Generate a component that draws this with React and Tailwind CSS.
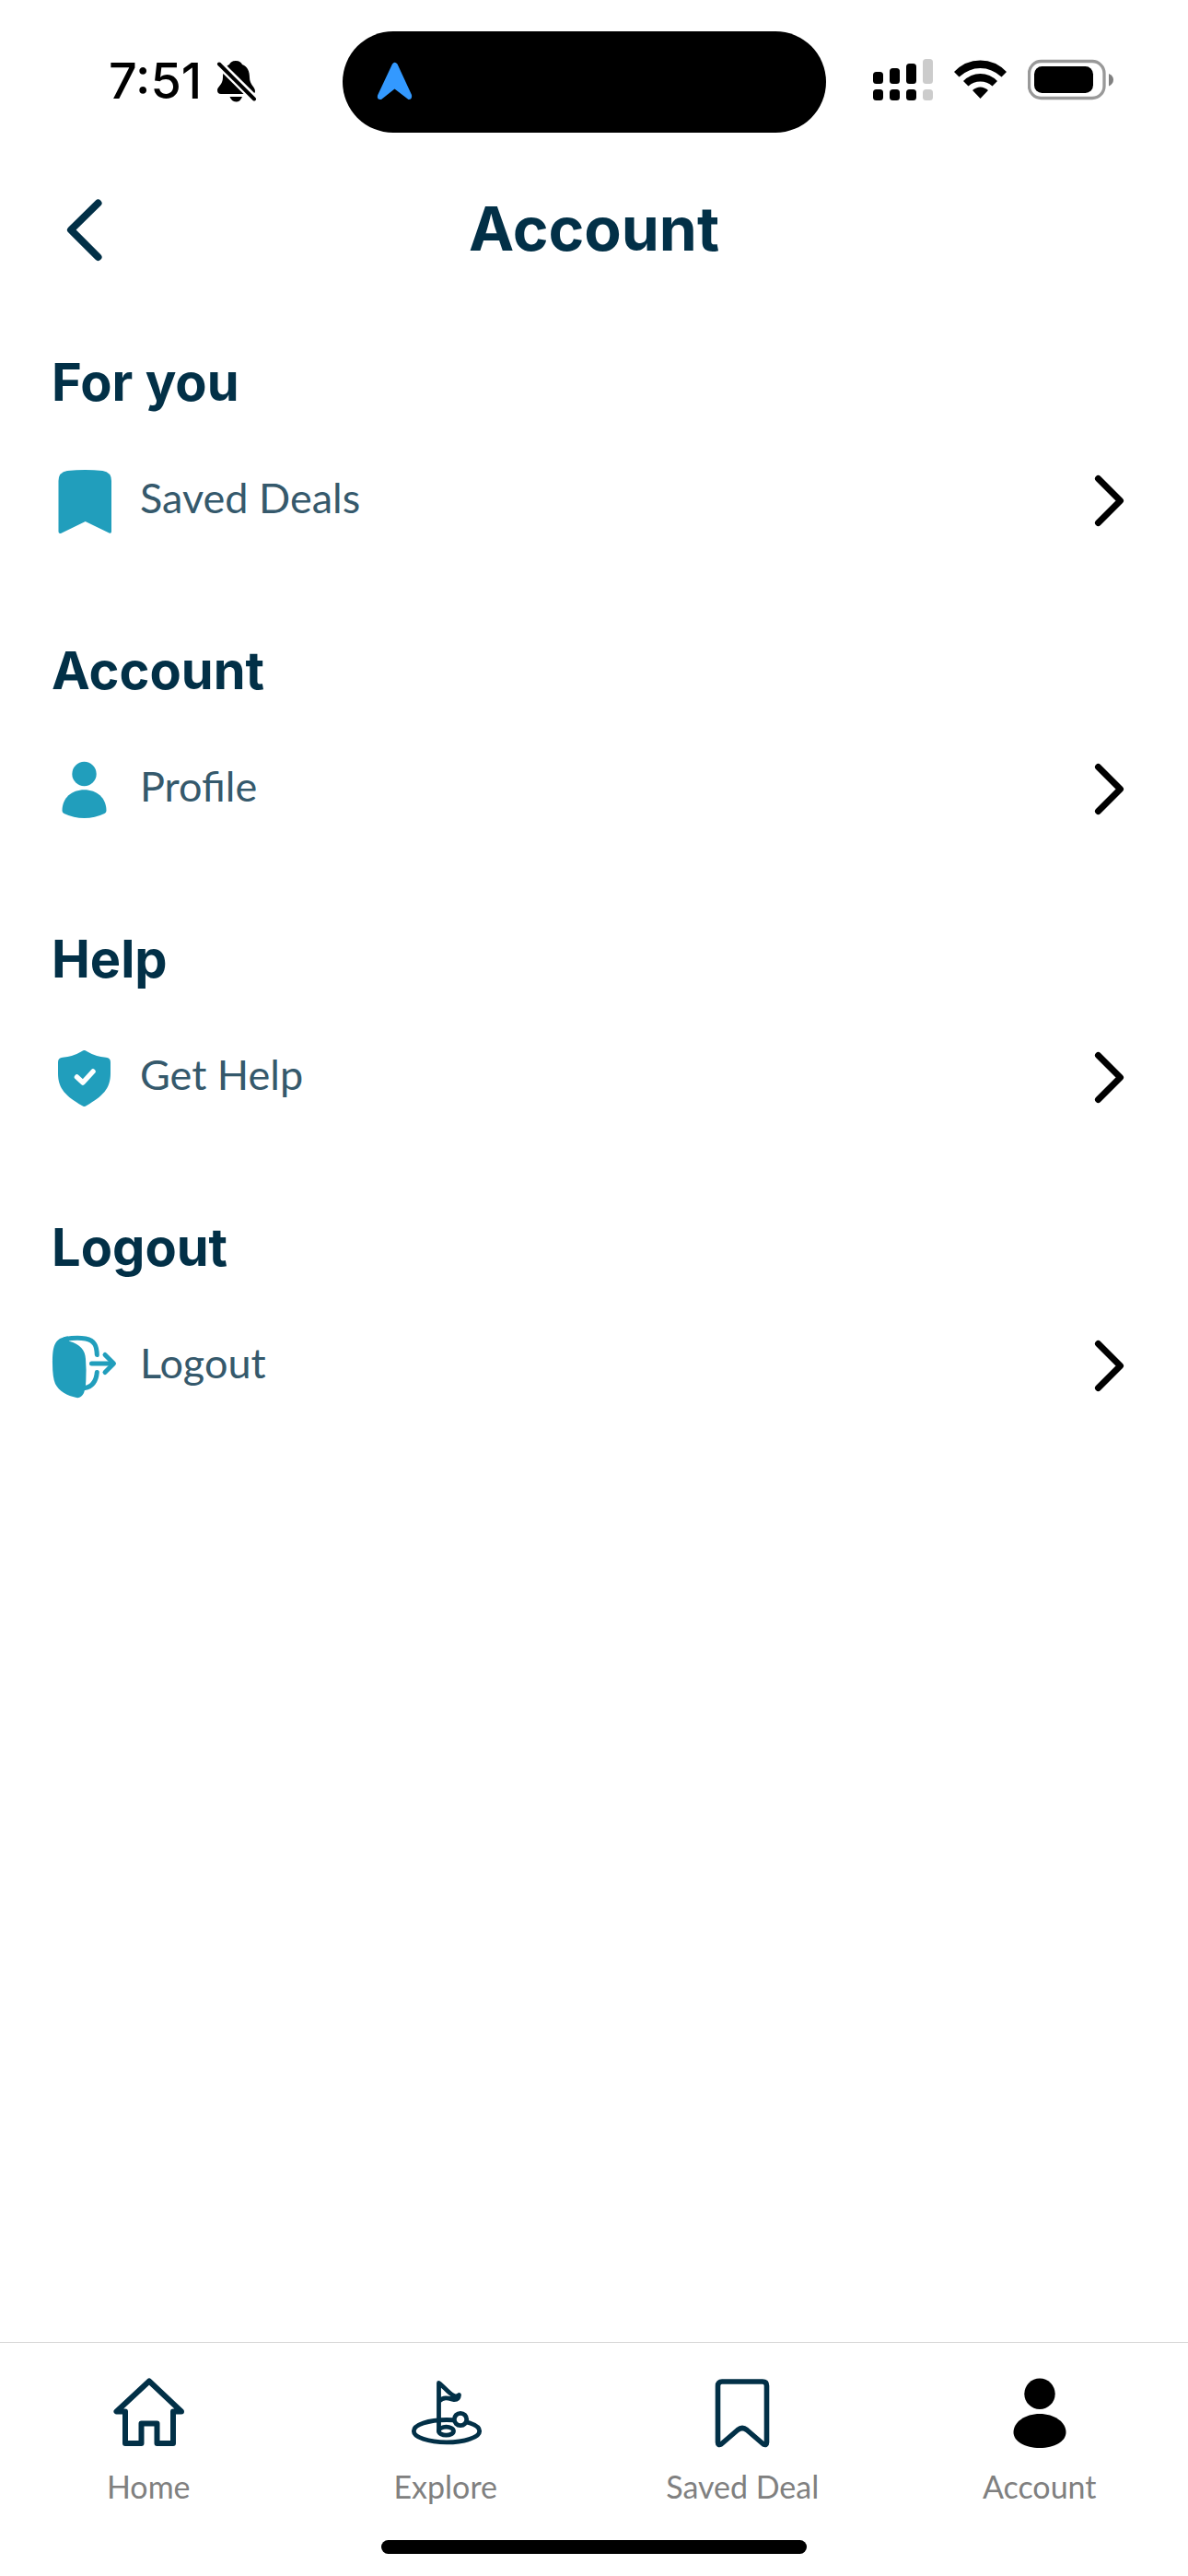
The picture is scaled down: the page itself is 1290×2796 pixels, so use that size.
import React from 'react'

const teal = '#219EBC'
const navy = '#023047'

const SavedIcon = () => (
    <svg viewBox="0 0 72 72" className="w-[72px] h-[72px]" fill={teal} aria-hidden="true">
        <path d="M7.5 14Q7.5 4.5 17 3Q36.5 1 55.5 3Q65 4.5 65 14V69Q65 71.5 62.5 70.5L36.7 58L10 71Q7.5 71.5 7.5 69Z" />
    </svg>
)

const ProfileIcon = () => (
    <svg viewBox="0 0 72 72" className="w-[72px] h-[72px]" fill={teal} aria-hidden="true">
        <circle cx="35.5" cy="19" r="13.2" />
        <path d="M11.5 59C11.5 45 22 36.3 35.5 36.3S59.5 45 59.5 59Q59.5 61 57.5 62Q47 67 35.5 67T13.5 62Q11.5 61 11.5 59Z" />
    </svg>
)

const HelpIcon = () => (
    <svg viewBox="0 0 72 72" className="w-[72px] h-[72px]" fill="none" aria-hidden="true">
        <path fill={teal} d="M33 7Q35.5 5 38 7Q48 13 59 13.7Q64 14 64 19V31C64 48 55 56 38 66Q35.5 68 33 66C16 56 7 48 7 31V19Q7 14 12 13.7Q23 13 33 7Z" />
        <path stroke="#fff" strokeWidth="5.5" strokeLinecap="round" strokeLinejoin="round" d="M27.5 35L34 41L45 29" />
    </svg>
)

const LogoutIcon = () => (
    <svg viewBox="0 0 72 72" className="w-[72px] h-[72px]" fill="none" aria-hidden="true">
        <path fill={teal} d="M1 33C1 14 3 5 18 3.5L19 8.7C31 12 36.5 18 37 28Q38 40 37.3 52Q37 60 35 65Q32 71 27 70C17 68 8 63 4 55Q1 48 1 33Z" />
        <path stroke={teal} strokeWidth="5" strokeLinecap="round" d="M15 6.5Q27 4.5 37 6C47 8 49 14 49.3 23.5M49.3 42.5C48.5 52 45 58 36 59.5M43.5 33H66" />
        <path stroke={teal} strokeWidth="5" strokeLinecap="round" strokeLinejoin="round" d="M58 23.5L67.5 33L58 42.5" />
    </svg>
)

const HomeTabIcon = () => (
    <svg viewBox="0 0 80 80" className="w-20 h-20" fill="none" stroke={navy} strokeWidth="6" strokeLinejoin="round" aria-hidden="true">
        <path d="M41 5.5L5.5 38.5H15V73H32.5V51.5H49.5V73H67V38.5H76Z" />
    </svg>
)

const ExploreTabIcon = () => (
    <svg viewBox="0 0 80 80" className="w-20 h-20" fill="none" stroke={navy} strokeWidth="4.8" strokeLinecap="round" strokeLinejoin="round" aria-hidden="true">
        <ellipse cx="41" cy="59.7" rx="35.7" ry="12.2" />
        <path d="M32.5 59.7V7.5C38 11 42 18 49 21.5Q52 23 54.5 20.5Q54 26 48.5 25.5C43 24 38 22 33 27" />
        <ellipse cx="40.5" cy="59.7" rx="8" ry="4.5" />
        <circle cx="56" cy="47" r="6.7" fill="#fff" />
    </svg>
)

const SavedTabIcon = () => (
    <svg viewBox="0 0 80 80" className="w-20 h-20" fill="none" stroke={navy} strokeWidth="5.6" strokeLinejoin="round" aria-hidden="true">
        <path d="M13.5 72V10.5Q13.5 6 18 6H62Q66.5 6 66.5 10.5V72Q66.5 75.5 63 74L45 58.5Q40 54.5 35 58.5L17 74Q13.5 75.5 13.5 72Z" />
    </svg>
)

const AccountTabIcon = () => (
    <svg viewBox="0 0 80 80" className="w-20 h-20" aria-hidden="true">
        <circle cx="40" cy="19.3" r="16.7" />
        <path d="M40 41C56 41 68.5 50 68.5 61C68.5 71 56 78 40 78S11.5 71 11.5 61C11.5 50 24 41 40 41Z" />
    </svg>
)

const sections = [
    { title: 'For you', label: 'Saved Deals', Icon: SavedIcon },
    { title: 'Account', label: 'Profile', Icon: ProfileIcon },
    { title: 'Help', label: 'Get Help', Icon: HelpIcon },
    { title: 'Logout', label: 'Logout', Icon: LogoutIcon },
]

const tabs = [
    { label: 'Home', Icon: HomeTabIcon },
    { label: 'Explore', Icon: ExploreTabIcon },
    { label: 'Saved Deal', Icon: SavedTabIcon },
    { label: 'Account', Icon: AccountTabIcon },
]

function StatusBar() {
    return (
        <div className="grid grid-cols-[1fr_525px_1fr] items-center pt-[34px] pr-[22px]">
            <div className="flex items-center gap-4 pl-[118px] pb-0.5">
                <span className="text-[54px] leading-[64px] font-medium text-black">7:51</span>
                <svg viewBox="0 0 44 46" className="w-11 h-[46px] shrink-0" aria-hidden="true">
                    <path d="M21 1C25 1 27 3 28 5C34 7 36 13 36 19C36 27 42 29 42 34Q42 37 38 37H5Q1 37 1 33C1 29 7 27 7 19C7 13 9 7 14 5C15 3 17 1 21 1Z" />
                    <path d="M14.5 40H28Q26 45.5 21.3 45.5T14.5 40Z" />
                    <path d="M3 4.5L41 42" stroke="#fff" strokeWidth="9" />
                    <path d="M3 4.5L41 42.5" stroke="#000" strokeWidth="4" strokeLinecap="round" />
                </svg>
            </div>
            <div className="h-[110px] rounded-full bg-black flex items-center pl-[37px] pb-0.5">
                <svg viewBox="0 0 40 44" className="w-10 h-11" fill="#3399FF" aria-hidden="true">
                    <path d="M17 3.5Q19.5 0 22.5 3.5L38 37Q39 42 34.5 42L19.5 30.5L5 42Q0 42.5 1 37.5Z" />
                </svg>
            </div>
            <div className="flex items-center gap-[22px] pl-[51px] pb-1">
                <svg viewBox="0 0 66 46" className="w-[66px] h-[46px] shrink-0" aria-hidden="true">
                    <rect x="0" y="14" width="11" height="13" rx="3.5" />
                    <rect x="18" y="10" width="11" height="17" rx="3.5" />
                    <rect x="36" y="5" width="11" height="22" rx="3.5" />
                    <rect x="54" y="0" width="11" height="27" rx="3.5" fill="#ccc" />
                    <rect x="0" y="33" width="11" height="12" rx="3.5" />
                    <rect x="18" y="33" width="11" height="12" rx="3.5" />
                    <rect x="36" y="33" width="11" height="12" rx="3.5" />
                    <rect x="54" y="33" width="11" height="12" rx="3.5" fill="#ccc" />
                </svg>
                <svg viewBox="0 0 58 46" className="w-[58px] h-[46px] shrink-0" aria-hidden="true">
                    <path d="M0 14Q12 1.5 28.5 1.5T57 14L51.5 19.5Q41 10 28.5 10T5.5 19.5Z" />
                    <path d="M10 24Q18 16 28.5 16T47 24L41.5 29.5Q36 24.5 28.5 24.5T15.5 29.5Z" />
                    <path d="M20 34Q24 30.5 28.5 30.5T37 34L28.5 43Z" />
                </svg>
                <svg viewBox="0 0 94 46" className="w-[94px] h-[46px] shrink-0" aria-hidden="true">
                    <rect x="1.5" y="2.5" width="81.5" height="40" rx="13" fill="none" stroke="#999" strokeWidth="3.3" />
                    <rect x="7" y="8" width="64" height="29" rx="8.5" />
                    <path d="M88 16Q93 18 93 22.5T88 29.5Z" fill="#808080" />
                </svg>
            </div>
        </div>
    )
}

export default function App() {
    return (
        <div className="min-h-screen flex flex-col bg-white font-['Inter',sans-serif]">
            <StatusBar />

            <header className="grid grid-cols-[72px_1fr_72px] items-center px-14 pt-[70px]">
                <button type="button" aria-label="Back">
                    <svg viewBox="0 0 72 72" className="w-[72px] h-[72px]" fill="none" stroke={navy} strokeWidth="8" strokeLinecap="round" strokeLinejoin="round">
                        <path d="M50.5 6.5L21 35.5L50.5 65" />
                    </svg>
                </button>
                <h1 className="text-center text-[66px] leading-[68px] pb-1 font-bold text-[#023047]">Account</h1>
            </header>

            <main className="flex-1 flex flex-col gap-[116px] px-14 pt-[97px]">
                {sections.map(({ title, label, Icon }) => (
                    <section key={title}>
                        <h2 className="text-[56px] leading-[64px] font-bold text-[#023047]">{title}</h2>
                        <a href="#" className="mt-[61px] flex items-center">
                            <Icon />
                            <span className="ml-6 pb-2 flex-1 font-['Lato',sans-serif] text-[45px] leading-[56px] text-[#35596C]">{label}</span>
                            <svg viewBox="0 0 48 72" className="w-12 h-[72px]" fill="none" stroke="#000" strokeWidth="7" strokeLinecap="round" strokeLinejoin="round" aria-hidden="true">
                                <path d="M6.5 11.5L30.5 35.5L6.5 59.5" />
                            </svg>
                        </a>
                    </section>
                ))}
            </main>

            <nav className="border-t border-[#d8d8d8] pt-9 pb-6">
                <div className="grid grid-cols-4">
                    {tabs.map(({ label, Icon }) => (
                        <a key={label} href="#" className="flex flex-col items-center gap-5">
                            <Icon />
                            <span className="font-['Lato',sans-serif] text-[34px] leading-10 text-[#808080]">{label}</span>
                        </a>
                    ))}
                </div>
                <div className="mt-[38px] mx-auto h-[15px] w-[462px] rounded-full bg-black" />
            </nav>
        </div>
    )
}
